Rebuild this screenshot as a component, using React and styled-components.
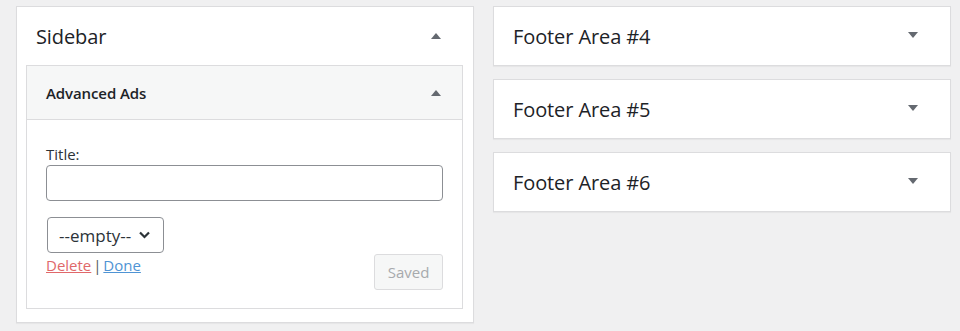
import React from "react";
import styled, { createGlobalStyle } from "styled-components";

const Global = createGlobalStyle`
  html, body { margin: 0; padding: 0; background: #f0f0f1; }
  body { font-family: "Open Sans", "Noto Sans", sans-serif; color: #1d2327; }
  * { box-sizing: border-box; }
`;

const Page = styled.div`
  display: grid;
  grid-template-columns: 458px 458px;
  column-gap: 19px;
  align-items: start;
  padding: 6px 9px 9px 16px;
`;

const Column = styled.div`
  display: flex;
  flex-direction: column;
  gap: 13px;
`;

const Panel = styled.div`
  background: #fff;
  border: 1px solid #dcdcde;
  box-shadow: 0 1px 1px rgba(0, 0, 0, 0.04);
  padding-bottom: ${(p) => (p.$open ? "13px" : "0")};
`;

const PanelHead = styled.div`
  height: 58px;
  display: flex;
  align-items: center;
  justify-content: space-between;
  padding: 0 32px 0 19px;
`;

const PanelTitle = styled.h2`
  margin: 0;
  font-size: 20px;
  font-weight: 400;
  letter-spacing: -0.1px;
  color: #1d2327;
`;

const Arrow = styled.span`
  width: 0;
  height: 0;
  border-left: 5px solid transparent;
  border-right: 5px solid transparent;
  ${(p) =>
    p.$up
      ? "border-bottom: 6px solid #646970;"
      : "border-top: 6px solid #646970;"}
  margin-top: ${(p) => (p.$up ? "0" : "-3px")};
`;

const Widget = styled.div`
  margin: 0 10px 0 9px;
  border: 1px solid #dcdcde;
  background: #fff;
`;

const WidgetHead = styled.div`
  height: 54px;
  background: #f6f7f7;
  border-bottom: 1px solid #dcdcde;
  display: flex;
  align-items: center;
  justify-content: space-between;
  padding: 0 21px 0 19px;
`;

const WidgetTitle = styled.h3`
  margin: 0;
  font-size: 15px;
  font-weight: 600;
  letter-spacing: -0.1px;
`;

const WidgetBody = styled.div`
  padding: 24px 19px 18px 19px;
`;

const Label = styled.label`
  display: block;
  font-size: 15px;
  line-height: 20px;
  color: #2c3338;
  margin-bottom: 1px;
`;

const TextInput = styled.input`
  display: block;
  width: 100%;
  height: 36px;
  border: 1px solid #8c8f94;
  border-radius: 4px;
  background: #fff;
  font: inherit;
`;

const SelectBox = styled.div`
  margin-top: 16px;
  margin-left: 1px;
  width: 117px;
  height: 36px;
  border: 1px solid #8c8f94;
  border-radius: 4px;
  display: flex;
  align-items: center;
  justify-content: space-between;
  padding: 0 13px 0 11px;
  font-size: 17px;
  color: #2c3338;
`;

const Footer = styled.div`
  display: flex;
  justify-content: space-between;
  align-items: flex-start;
`;

const Links = styled.div`
  font-size: 15px;
  line-height: 20px;
  padding-top: 2px;
  color: #50575e;
  word-spacing: -2px;
`;

const Link = styled.a`
  color: ${(p) => (p.$danger ? "#e0686a" : "#4f94d4")};
  text-decoration: underline;
  word-spacing: normal;
`;

const SavedButton = styled.button`
  margin-top: 1px;
  width: 69px;
  height: 36px;
  border: 1px solid #dcdcde;
  border-radius: 3px;
  background: #f6f7f7;
  color: #a7aaad;
  font: inherit;
  font-size: 15px;
`;

const Chevron = () => (
  <svg width="11" height="8" viewBox="0 0 11 8">
    <path d="M1 1.5 L5.5 6 L10 1.5" fill="none" stroke="#2c3338" strokeWidth="2.2" />
  </svg>
);

const footers = ["Footer Area #4", "Footer Area #5", "Footer Area #6"];

export default function App() {
  return (
    <>
      <Global />
      <Page>
        <Panel $open>
          <PanelHead>
            <PanelTitle>Sidebar</PanelTitle>
            <Arrow $up />
          </PanelHead>
          <Widget>
            <WidgetHead>
              <WidgetTitle>Advanced Ads</WidgetTitle>
              <Arrow $up />
            </WidgetHead>
            <WidgetBody>
              <Label>Title:</Label>
              <TextInput type="text" />
              <SelectBox>
                <span>--empty--</span>
                <Chevron />
              </SelectBox>
              <Footer>
                <Links>
                  <Link $danger href="#">Delete</Link> | <Link href="#">Done</Link>
                </Links>
                <SavedButton disabled>Saved</SavedButton>
              </Footer>
            </WidgetBody>
          </Widget>
        </Panel>
        <Column>
          {footers.map((f) => (
            <Panel key={f}>
              <PanelHead>
                <PanelTitle>{f}</PanelTitle>
                <Arrow />
              </PanelHead>
            </Panel>
          ))}
        </Column>
      </Page>
    </>
  );
}
